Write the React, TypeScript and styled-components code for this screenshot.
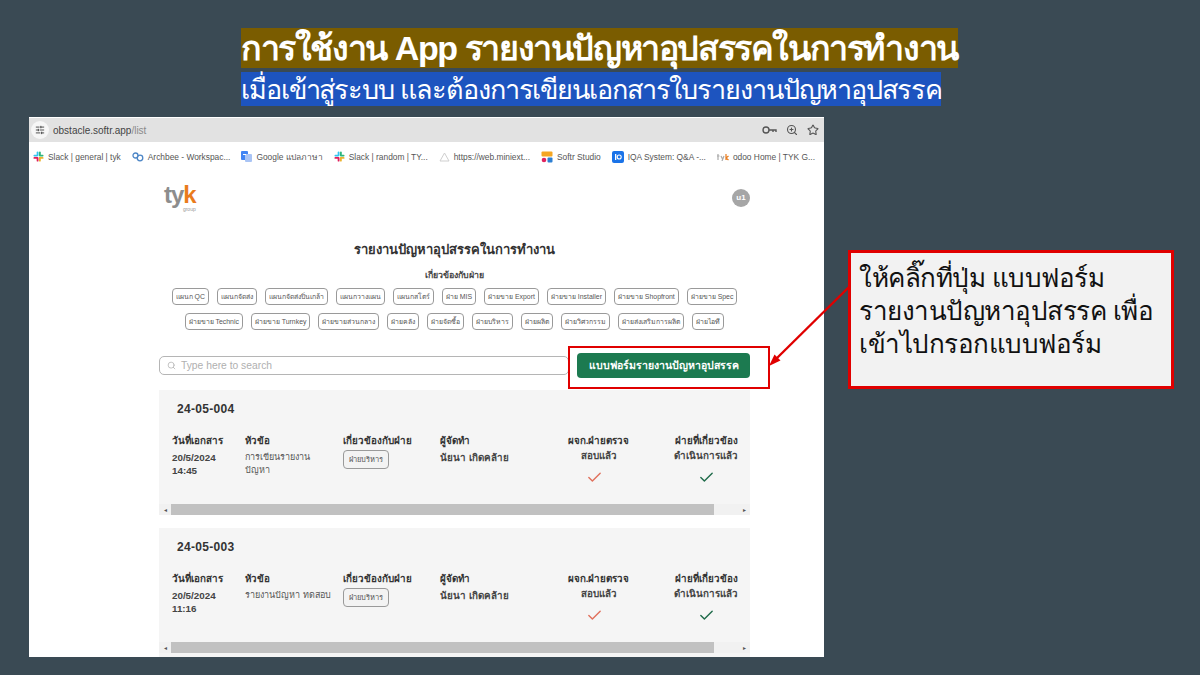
import React from 'react';
import styled, { createGlobalStyle } from 'styled-components';
import { Check, Search, SlidersHorizontal, Star, ZoomIn } from 'lucide-react';

const GlobalStyle = createGlobalStyle`
  html, body {
    margin: 0;
    padding: 0;
    background: #3a4a54;
  }
  body {
    font-family: "Liberation Sans", "Noto Sans", sans-serif;
  }
`;

const Slide = styled.div`
  position: relative;
  box-sizing: border-box;
  width: 1200px;
  height: 675px;
  overflow: hidden;
  background: #3a4a54;
  padding-top: 28px;
`;

const Header = styled.header`
  display: flex;
  flex-direction: column;
  align-items: flex-start;
  gap: 4px;
  padding-left: 241px;
  height: 89px;
`;

const TitleBand = styled.h1`
  margin: 0;
  width: 717px;
  height: 40px;
  line-height: 40px;
  background: #7a5c00;
  color: #fff;
  font-size: 34px;
  font-weight: 700;
  letter-spacing: -1.4px;
  white-space: nowrap;
`;

const SubtitleBand = styled.h2`
  margin: 0;
  width: 700px;
  height: 34px;
  line-height: 36px;
  background: #1d54bf;
  color: #fff;
  font-size: 27px;
  font-weight: 400;
  letter-spacing: -1.1px;
  white-space: nowrap;
`;

const Main = styled.main`
  display: flex;
  align-items: flex-start;
  gap: 24px;
  padding-left: 29px;
`;

const Browser = styled.section`
  width: 795px;
  height: 540px;
  background: #fff;
  overflow: hidden;
  flex: none;
`;

const AddressBar = styled.div`
  display: flex;
  align-items: center;
  height: 24px;
  background: #e2e2e2;
  margin-top: 1px;
  padding: 0 5px 0 2px;
  color: #5a5a5a;
  font-size: 10px;
`;

const TuneButton = styled.span`
  display: flex;
  align-items: center;
  justify-content: center;
  width: 18px;
  height: 18px;
  border-radius: 50%;
  background: #f6f6f6;
  color: #333;
  margin-right: 4px;
`;

const Url = styled.span`
  flex: 1;
  color: #444;
  span {
    color: #8a8a8a;
  }
`;

const BarIcons = styled.div`
  display: flex;
  align-items: center;
  gap: 9px;
  color: #555;
`;

const Bookmarks = styled.nav`
  display: flex;
  align-items: center;
  justify-content: space-between;
  height: 29px;
  padding: 0 9px 0 4px;
  font-size: 8.4px;
  color: #555;
`;

const Bookmark = styled.span`
  display: flex;
  align-items: center;
  gap: 4px;
  white-space: nowrap;
`;

const Page = styled.div`
  width: 591px;
  margin-left: 130px;
`;

const TopRow = styled.div`
  display: flex;
  align-items: center;
  justify-content: space-between;
  height: 35px;
  margin-top: 9px;
`;

const Logo = styled.div`
  display: flex;
  flex-direction: column;
  align-items: flex-end;
  margin-left: 5px;
  color: #8d8d8d;
  font-size: 24px;
  font-weight: 700;
  line-height: 24px;
  letter-spacing: -1px;
  span {
    color: #e97b1c;
  }
  small {
    font-size: 5px;
    line-height: 5px;
    font-weight: 400;
    letter-spacing: 0;
    color: #999;
  }
`;

const Avatar = styled.div`
  display: flex;
  align-items: center;
  justify-content: center;
  width: 18px;
  height: 18px;
  border-radius: 50%;
  background: #a6a6a6;
  color: #fff;
  font-size: 8px;
  font-weight: 700;
`;

const PageTitle = styled.h3`
  margin: 25px 0 0;
  text-align: center;
  font-size: 13px;
  line-height: 20px;
  color: #333;
`;

const FilterLabel = styled.div`
  margin-top: 9px;
  text-align: center;
  font-size: 8.8px;
  font-weight: 700;
  line-height: 12px;
  color: #444;
`;

const ChipRow = styled.div<{ $top: number }>`
  display: flex;
  justify-content: center;
  gap: 8px;
  margin-top: ${(p) => p.$top}px;
`;

const Chip = styled.span`
  display: inline-flex;
  align-items: center;
  box-sizing: border-box;
  height: 17px;
  padding: 0 3px;
  border: 1px solid #9a9a9a;
  border-radius: 4px;
  background: #fff;
  color: #555;
  font-size: 6.9px;
  white-space: nowrap;
`;

const SearchRow = styled.div`
  display: flex;
  align-items: center;
  height: 43px;
  margin-top: 15px;
`;

const SearchBox = styled.div`
  display: flex;
  align-items: center;
  gap: 5px;
  box-sizing: border-box;
  width: 410px;
  height: 19px;
  margin-bottom: 2px;
  padding: 0 7px;
  border: 1px solid #b5b5b5;
  border-radius: 5px;
  color: #b0b0b0;
  font-size: 10.3px;
  flex: none;
`;

const Highlight = styled.div`
  display: flex;
  align-items: center;
  box-sizing: border-box;
  width: 202px;
  height: 43px;
  margin: 2px 0 0 -1px;
  padding: 0 0 4px 7px;
  border: 2px solid #e00000;
  flex: none;
`;

const FormButton = styled.button`
  width: 173px;
  height: 25px;
  padding: 0;
  border: none;
  border-radius: 4px;
  background: #1c7a50;
  color: #fff;
  font-family: inherit;
  font-size: 10.5px;
  font-weight: 700;
`;

const Card = styled.article<{ $height: number; $top: number }>`
  box-sizing: border-box;
  width: 591px;
  height: ${(p) => p.$height}px;
  margin-top: ${(p) => p.$top}px;
  background: #f5f5f5;
  overflow: hidden;
`;

const CardCode = styled.div`
  margin: 11px 0 0 18px;
  font-size: 12px;
  font-weight: 700;
  line-height: 16px;
  color: #333;
  letter-spacing: 0.3px;
`;

const Columns = styled.div`
  display: grid;
  grid-template-columns: 73px 98px 97px 114px 89px 126px;
  margin: 16px 0 0 13px;
  height: 71px;
  width: 606px;
`;

const Column = styled.div<{ $center?: boolean }>`
  font-size: 9.8px;
  font-weight: 700;
  line-height: 15px;
  color: #444;
  text-align: ${(p) => (p.$center ? 'center' : 'left')};
`;

const ColumnHead = styled.div`
  color: #333;
  margin-bottom: 3px;
  white-space: nowrap;
`;

const CenterHead = styled.div`
  color: #333;
  white-space: nowrap;
`;

const CellText = styled.div<{ $width?: number }>`
  color: #555;
  font-size: 9px;
  font-weight: 400;
  line-height: 13px;
  width: ${(p) => (p.$width ? `${p.$width}px` : 'auto')};
  white-space: ${(p) => (p.$width ? 'normal' : 'nowrap')};
`;

const PersonText = styled.div`
  color: #444;
  line-height: 13px;
  white-space: nowrap;
`;

const DateText = styled.div`
  color: #444;
  line-height: 13px;
`;

const DeptChip = styled.span`
  display: inline-flex;
  align-items: center;
  box-sizing: border-box;
  height: 19px;
  margin-top: -2px;
  padding: 0 5px;
  border: 1px solid #9a9a9a;
  border-radius: 4px;
  background: #f3f3f3;
  color: #555;
  font-size: 7.5px;
  font-weight: 400;
`;

const CheckMark = styled.div<{ $color: string; $shift?: number }>`
  display: flex;
  justify-content: center;
  margin-top: 6px;
  padding-right: ${(p) => p.$shift ?? 0}px;
  color: ${(p) => p.$color};
`;

const ScrollBar = styled.div`
  display: flex;
  align-items: center;
  height: 11px;
  background: #f1f1f1;
  color: #555;
  font-size: 6px;
`;

const ScrollArrow = styled.span`
  width: 12px;
  text-align: center;
  flex: none;
`;

const ScrollTrack = styled.div`
  flex: 1;
  height: 100%;
`;

const ScrollThumb = styled.div`
  width: 543px;
  height: 100%;
  background: #c1c1c1;
`;

const Callout = styled.aside`
  box-sizing: border-box;
  width: 326px;
  height: 139px;
  margin-top: 133px;
  padding: 9px 0 0 8px;
  border: 3px solid #e00000;
  background: #f2f2f2;
  color: #111;
  font-size: 26px;
  letter-spacing: -0.5px;
  line-height: 33px;
  flex: none;
`;

const ArrowOverlay = styled.svg`
  position: absolute;
  left: 760px;
  top: 280px;
`;

const KeyIcon = () => (
  <svg width="15" height="12" viewBox="0 0 15 12" fill="none" stroke="currentColor" strokeWidth="1.4">
    <circle cx="4" cy="6" r="3" />
    <path d="M7 6H14V8M11 6V8" />
  </svg>
);

const SlackIcon = () => (
  <svg width="11" height="11" viewBox="0 0 12 12">
    <rect x="4" y="0.5" width="2" height="5" rx="1" fill="#36c5f0" />
    <rect x="0.5" y="4" width="5" height="2" rx="1" fill="#36c5f0" />
    <rect x="6.5" y="0.5" width="2" height="5" rx="1" fill="#2eb67d" />
    <rect x="6.5" y="4" width="5" height="2" rx="1" fill="#2eb67d" />
    <rect x="6.5" y="6.5" width="5" height="2" rx="1" fill="#ecb22e" />
    <rect x="6.5" y="6.5" width="2" height="5" rx="1" fill="#ecb22e" />
    <rect x="0.5" y="6.5" width="5" height="2" rx="1" fill="#e01e5a" />
    <rect x="4" y="6.5" width="2" height="5" rx="1" fill="#e01e5a" />
  </svg>
);

const ArchbeeIcon = () => (
  <svg width="12" height="10" viewBox="0 0 12 10" fill="none" stroke="#4d86c6" strokeWidth="1.3">
    <circle cx="3.5" cy="3.5" r="2.5" />
    <circle cx="8" cy="6" r="2.8" />
  </svg>
);

const TranslateIcon = () => (
  <svg width="11" height="11" viewBox="0 0 11 11">
    <rect x="0" y="0" width="7" height="9" rx="1" fill="#4285f4" />
    <rect x="4" y="3" width="7" height="8" rx="1" fill="#a9c4f5" />
    <rect x="2" y="3" width="3" height="1" fill="#fff" />
  </svg>
);

const DriveIcon = () => (
  <svg width="11" height="10" viewBox="0 0 11 10" fill="none" stroke="#cfcfcf" strokeWidth="1">
    <path d="M5.5 1 L10 9 H1 Z" />
  </svg>
);

const SoftrIcon = () => (
  <svg width="12" height="12" viewBox="0 0 12 12">
    <rect x="0.5" y="0.5" width="11" height="5" rx="1" fill="#f5a623" />
    <circle cx="3" cy="9" r="2.3" fill="#e0245e" />
    <rect x="6.5" y="6.5" width="5" height="5" rx="1" fill="#2d7fd3" />
  </svg>
);

const IqaIcon = () => (
  <svg width="12" height="12" viewBox="0 0 12 12">
    <rect width="12" height="12" rx="2" fill="#1a73e8" />
    <rect x="3" y="3" width="1.3" height="6" fill="#fff" />
    <circle cx="7.2" cy="6" r="2" fill="none" stroke="#fff" strokeWidth="1.1" />
  </svg>
);

const TykIcon = () => (
  <svg width="12" height="8" viewBox="0 0 12 8" fill="none" strokeWidth="1.2">
    <path d="M1 1V7M0 3H2.5M4 3L5.5 6M7 3L5 8" stroke="#aaa" />
    <path d="M9 1V7M11.5 3L9 5L11.5 7" stroke="#e97b1c" />
  </svg>
);

const bookmarks = [
  { icon: <SlackIcon />, label: 'Slack | general | tyk' },
  { icon: <ArchbeeIcon />, label: 'Archbee - Workspac...' },
  { icon: <TranslateIcon />, label: 'Google แปลภาษา' },
  { icon: <SlackIcon />, label: 'Slack | random | TY...' },
  { icon: <DriveIcon />, label: 'https://web.miniext...' },
  { icon: <SoftrIcon />, label: 'Softr Studio' },
  { icon: <IqaIcon />, label: 'IQA System: Q&A -...' },
  { icon: <TykIcon />, label: 'odoo Home | TYK G...' },
];

const chipsTop = ['แผนก QC', 'แผนกจัดส่ง', 'แผนกจัดส่งปิ่นเกล้า', 'แผนกวางแผน', 'แผนกสโตร์', 'ฝ่าย MIS', 'ฝ่ายขาย Export', 'ฝ่ายขาย Installer', 'ฝ่ายขาย Shopfront', 'ฝ่ายขาย Spec'];
const chipsBottom = ['ฝ่ายขาย Technic', 'ฝ่ายขาย Turnkey', 'ฝ่ายขายส่วนกลาง', 'ฝ่ายคลัง', 'ฝ่ายจัดซื้อ', 'ฝ่ายบริหาร', 'ฝ่ายผลิต', 'ฝ่ายวิศวกรรม', 'ฝ่ายส่งเสริมการผลิต', 'ฝ่ายไอที'];

interface ReportCardProps {
  code: string;
  date: string;
  time: string;
  subject: string;
  subjectWidth?: number;
  height: number;
  top: number;
}

const ReportCard = ({ code, date, time, subject, subjectWidth, height, top }: ReportCardProps) => (
  <Card $height={height} $top={top}>
    <CardCode>{code}</CardCode>
    <Columns>
      <Column>
        <ColumnHead>วันที่เอกสาร</ColumnHead>
        <DateText>{date}</DateText>
        <DateText>{time}</DateText>
      </Column>
      <Column>
        <ColumnHead>หัวข้อ</ColumnHead>
        <CellText $width={subjectWidth}>{subject}</CellText>
      </Column>
      <Column>
        <ColumnHead>เกี่ยวข้องกับฝ่าย</ColumnHead>
        <DeptChip>ฝ่ายบริหาร</DeptChip>
      </Column>
      <Column>
        <ColumnHead>ผู้จัดทำ</ColumnHead>
        <PersonText>นัยนา เกิดคล้าย</PersonText>
      </Column>
      <Column $center>
        <CenterHead>ผจก.ฝ่ายตรวจ</CenterHead>
        <div>สอบแล้ว</div>
        <CheckMark $color="#e0705c" $shift={9}>
          <Check size={17} strokeWidth={2} />
        </CheckMark>
      </Column>
      <Column $center>
        <CenterHead>ฝ่ายที่เกี่ยวข้อง</CenterHead>
        <div>ดำเนินการแล้ว</div>
        <CheckMark $color="#1f6b4a">
          <Check size={17} strokeWidth={2} />
        </CheckMark>
      </Column>
    </Columns>
    <ScrollBar>
      <ScrollArrow>◂</ScrollArrow>
      <ScrollTrack>
        <ScrollThumb />
      </ScrollTrack>
      <ScrollArrow>▸</ScrollArrow>
    </ScrollBar>
  </Card>
);

export default function App() {
  return (
    <Slide>
      <GlobalStyle />
      <Header>
        <TitleBand>การใช้งาน App รายงานปัญหาอุปสรรคในการทำงาน</TitleBand>
        <SubtitleBand>เมื่อเข้าสู่ระบบ และต้องการเขียนเอกสารใบรายงานปัญหาอุปสรรค</SubtitleBand>
      </Header>
      <Main>
        <Browser>
          <AddressBar>
            <TuneButton>
              <SlidersHorizontal size={10} />
            </TuneButton>
            <Url>
              obstacle.softr.app<span>/list</span>
            </Url>
            <BarIcons>
              <KeyIcon />
              <ZoomIn size={12} strokeWidth={2.2} />
              <Star size={12} strokeWidth={2.2} />
            </BarIcons>
          </AddressBar>
          <Bookmarks>
            {bookmarks.map((b) => (
              <Bookmark key={b.label}>
                {b.icon}
                {b.label}
              </Bookmark>
            ))}
          </Bookmarks>
          <Page>
            <TopRow>
              <Logo>
                <div>
                  ty<span>k</span>
                </div>
                <small>group</small>
              </Logo>
              <Avatar>u1</Avatar>
            </TopRow>
            <PageTitle>รายงานปัญหาอุปสรรคในการทำงาน</PageTitle>
            <FilterLabel>เกี่ยวข้องกับฝ่าย</FilterLabel>
            <ChipRow $top={7}>
              {chipsTop.map((c) => (
                <Chip key={c}>{c}</Chip>
              ))}
            </ChipRow>
            <ChipRow $top={8}>
              {chipsBottom.map((c) => (
                <Chip key={c}>{c}</Chip>
              ))}
            </ChipRow>
            <SearchRow>
              <SearchBox>
                <Search size={9} />
                Type here to search
              </SearchBox>
              <Highlight>
                <FormButton>แบบฟอร์มรายงานปัญหาอุปสรรค</FormButton>
              </Highlight>
            </SearchRow>
            <ReportCard code="24-05-004" date="20/5/2024" time="14:45" subject="การเขียนรายงานปัญหา" subjectWidth={72} height={125} top={2} />
            <ReportCard code="24-05-003" date="20/5/2024" time="11:16" subject="รายงานปัญหา ทดสอบ" height={140} top={13} />
          </Page>
        </Browser>
        <Callout>
          ให้คลิ๊กที่ปุ่ม แบบฟอร์ม
          <br />
          รายงานปัญหาอุปสรรค เพื่อ
          <br />
          เข้าไปกรอกแบบฟอร์ม
        </Callout>
      </Main>
      <ArrowOverlay width="95" height="95" viewBox="0 0 95 95">
        <path d="M90 6 L17 78" stroke="#e00000" strokeWidth="2.4" fill="none" />
        <path d="M9 86 L14.5 74.6 L20.5 80.6 Z" fill="#e00000" />
      </ArrowOverlay>
    </Slide>
  );
}
